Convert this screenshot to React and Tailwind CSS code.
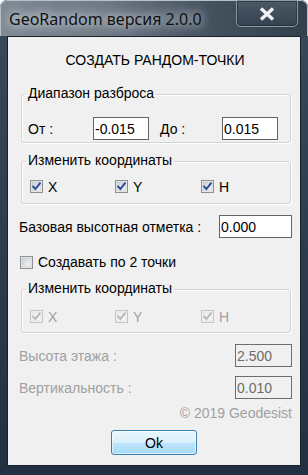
import React from "react";

function Box({ checked = false, disabled = false }) {
  const border = disabled ? "#c4c4c4" : "#8e8f8f";
  const id = disabled ? "gd" : "ge";
  return (
    <svg width="13" height="13" viewBox="0 0 13 13" className="shrink-0">
      <defs>
        <linearGradient id={id} x1="0" y1="0" x2="1" y2="1">
          <stop offset="0" stopColor={disabled ? "#ececec" : "#c9ced6"} />
          <stop offset="1" stopColor={disabled ? "#f7f7f7" : "#f8f8f8"} />
        </linearGradient>
      </defs>
      <rect x="0.5" y="0.5" width="12" height="12" fill="#f4f4f4" stroke={border} />
      <rect x="2" y="2" width="9" height="9" fill={`url(#${id})`} stroke={disabled ? "#e0e0e0" : "#b9bec6"} strokeWidth="0.6" />
      {checked && (
        <path
          d="M3.2 6.6 L5.4 9 L9.8 3.4"
          fill="none"
          stroke={disabled ? "#b8b8b8" : "#2a4d9a"}
          strokeWidth="2"
          strokeLinecap="square"
        />
      )}
    </svg>
  );
}

function CheckRow({ disabled }) {
  const tc = disabled ? "text-[#a0a0a0]" : "text-black";
  return (
    <div className="flex items-center h-[13px] ml-[2px]">
      <div className="flex items-center w-[85px]">
        <Box checked disabled={disabled} />
        <span className={`ml-[5px] ${tc}`}>X</span>
      </div>
      <div className="flex items-center w-[86px]">
        <Box checked disabled={disabled} />
        <span className={`ml-[5px] ${tc}`}>Y</span>
      </div>
      <div className="flex items-center">
        <Box checked disabled={disabled} />
        <span className={`ml-[5px] ${tc}`}>H</span>
      </div>
    </div>
  );
}

function Legend({ children }) {
  return (
    <legend className="ml-[-2px] px-[2px] pb-[2px] text-[14px] leading-[16px] text-black">
      {children}
    </legend>
  );
}

const fs = "ml-[2px] w-[270px] border border-[#d3d3d3] rounded-[3px] shadow-[inset_1px_1px_0_#ffffff,1px_1px_0_#ffffff] pl-[6px]";

export default function App() {
  return (
    <div className="w-[308px] h-[475px] flex flex-col rounded-t-[7px] overflow-hidden bg-[linear-gradient(to_bottom,#3a4a5a,#223041)] font-['Liberation_Sans',Arial,sans-serif] text-[14px] leading-[16px]">
      <div className="h-[36px] shrink-0 flex items-start bg-[linear-gradient(to_right,#7f8a95_0%,#6c7884_35%,#44515e_68%,#323f4d_100%)] border-t border-l border-r border-[#b8c0c8] rounded-t-[7px]">
        <span className="ml-[8px] mt-[8px] font-['Noto_Sans',sans-serif] text-[16px] leading-[20px] text-[#111] [text-shadow:0_0_8px_rgba(235,240,245,0.95),0_0_14px_rgba(235,240,245,0.7)]">
          GeoRandom версия 2.0.0
        </span>
        <div className="ml-auto mr-[9px] mt-[-1px] w-[62px] h-[27px] rounded-b-[5px] border border-[#8d99a5] bg-[linear-gradient(to_bottom,#4b5967,#35424f)] flex items-center justify-center shadow-[inset_0_0_0_1px_rgba(20,30,40,0.5)]">
          <svg width="16" height="14" viewBox="0 0 16 14">
            <path d="M2 1.5 L14 12.5 M14 1.5 L2 12.5" stroke="#f2f2f2" strokeWidth="3.4" strokeLinecap="butt" />
          </svg>
        </div>
      </div>
      <div className="flex-1 flex pl-[7px] pr-[7px] pb-[9px]">
        <div className="flex-1 bg-[#f0f0f0] border border-[#18222e] flex flex-col pl-[11px] pr-[8px] text-black">
          <div className="mt-[15px] text-center pr-[1px]">СОЗДАТЬ РАНДОМ-ТОЧКИ</div>

          <fieldset className={`mt-[17px] pt-[14px] pb-[2px] ${fs}`}>
            <Legend>Диапазон разброса</Legend>
            <div className="flex items-center h-[23px]">
              <span className="w-[65px]">От :</span>
              <div className="w-[56px] h-[23px] border border-[#646464] bg-white pl-[1px] pt-[3px]">-0.015</div>
              <span className="ml-[11px] w-[62px]">До :</span>
              <div className="w-[56px] h-[23px] border border-[#646464] bg-white pl-[1px] pt-[3px]">0.015</div>
            </div>
          </fieldset>

          <fieldset className={`mt-[9px] pt-[10px] pb-[10px] ${fs}`}>
            <Legend>Изменить координаты</Legend>
            <CheckRow />
          </fieldset>

          <div className="mt-[11px] flex items-center h-[23px]">
            <span>Базовая высотная отметка :</span>
            <div className="ml-auto w-[73px] h-[23px] border border-[#646464] bg-white pl-[1px] pt-[3px]">0.000</div>
          </div>

          <div className="mt-[17px] flex items-center h-[14px] ml-[1px]">
            <Box />
            <span className="ml-[5px]">Создавать по 2 точки</span>
          </div>

          <fieldset className={`mt-[11px] pt-[12px] pb-[9px] ${fs}`}>
            <Legend>Изменить координаты</Legend>
            <CheckRow disabled />
          </fieldset>

          <div className="mt-[11px] flex items-center h-[23px] text-[#a0a0a0]">
            <span>Высота этажа :</span>
            <div className="ml-auto w-[57px] h-[23px] border border-[#6d6d6d] bg-[#f0f0f0] pl-[1px] pt-[3px] text-[#6d6d6d]">2.500</div>
          </div>
          <div className="mt-[9px] flex items-center h-[23px] text-[#a0a0a0]">
            <span>Вертикальность :</span>
            <div className="ml-auto w-[57px] h-[23px] border border-[#6d6d6d] bg-[#f0f0f0] pl-[1px] pt-[3px] text-[#6d6d6d]">0.010</div>
          </div>

          <div className="mt-[6px] text-right text-[#a0a0a0]">© 2019 Geodesist</div>

          <div className="mt-[9px] self-center ml-[-3px] w-[86px] h-[25px] rounded-[3px] border border-[#3c7fb1] bg-[linear-gradient(to_bottom,#eaf6fd_0%,#d9f0fc_50%,#bee6fd_51%,#a7d9f5_100%)] shadow-[inset_0_0_0_1px_rgba(255,255,255,0.6)] flex items-center justify-center">
            Ok
          </div>
        </div>
      </div>
    </div>
  );
}
